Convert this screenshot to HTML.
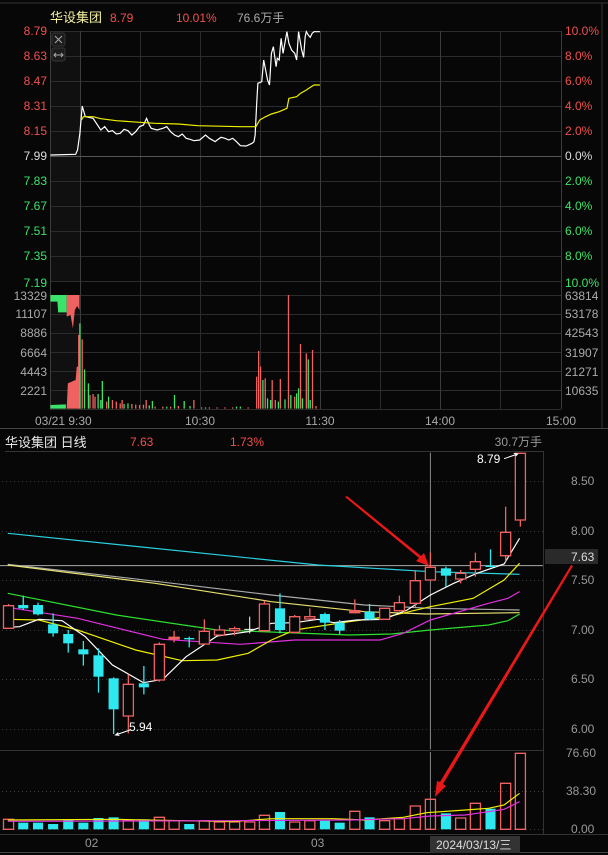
<!DOCTYPE html>
<html><head><meta charset="utf-8"><style>
html,body{margin:0;padding:0;background:#070707;}
svg{display:block;font-family:"Liberation Sans","Noto Sans CJK SC",sans-serif;}
.ns{vector-effect:non-scaling-stroke;}
</style></head><body>
<svg width="608" height="855" viewBox="0 0 608 855" xmlns="http://www.w3.org/2000/svg">
<rect width="608" height="855" fill="#070707"/>
<line x1="0" y1="3" x2="608" y2="3" stroke="#333" />
<line x1="602" y1="3" x2="602" y2="428" stroke="#333"/>
<line x1="0" y1="428.5" x2="608" y2="428.5" stroke="#444"/>
<line x1="0" y1="852.5" x2="608" y2="852.5" stroke="#444"/>
<rect x="50" y="31" width="30" height="251" fill="#101010"/>
<rect x="50" y="295" width="30" height="114" fill="#101010"/>
<g stroke="#2c2c2c" stroke-width="1">
<line x1="50" y1="31.5" x2="561" y2="31.5"/><line x1="50" y1="56.5" x2="561" y2="56.5"/><line x1="50" y1="81.5" x2="561" y2="81.5"/><line x1="50" y1="106.5" x2="561" y2="106.5"/><line x1="50" y1="131.5" x2="561" y2="131.5"/>
<line x1="50" y1="181.5" x2="561" y2="181.5"/><line x1="50" y1="206.5" x2="561" y2="206.5"/><line x1="50" y1="231.5" x2="561" y2="231.5"/><line x1="50" y1="256.5" x2="561" y2="256.5"/><line x1="50" y1="281.5" x2="561" y2="281.5"/>
<line x1="50" y1="295.5" x2="561" y2="295.5"/><line x1="50" y1="314.5" x2="561" y2="314.5"/><line x1="50" y1="333.5" x2="561" y2="333.5"/><line x1="50" y1="352.5" x2="561" y2="352.5"/><line x1="50" y1="371.5" x2="561" y2="371.5"/><line x1="50" y1="390.5" x2="561" y2="390.5"/><line x1="50" y1="409.5" x2="561" y2="409.5"/>
<line x1="140.5" y1="31" x2="140.5" y2="409"/><line x1="200.5" y1="31" x2="200.5" y2="409"/><line x1="260.5" y1="31" x2="260.5" y2="409"/><line x1="380.5" y1="31" x2="380.5" y2="409"/><line x1="500.5" y1="31" x2="500.5" y2="409"/>
</g>
<g stroke="#3c3c3c"><line x1="80.5" y1="31" x2="80.5" y2="409"/><line x1="320.5" y1="31" x2="320.5" y2="409"/><line x1="440.5" y1="31" x2="440.5" y2="409"/><line x1="50.5" y1="31" x2="50.5" y2="409"/><line x1="561.5" y1="31" x2="561.5" y2="409"/>
<line x1="50" y1="156.5" x2="561" y2="156.5" stroke="#555"/></g>
<rect x="52" y="33" width="13" height="13" fill="#1c1c1c" stroke="#333" rx="2"/>
<path d="M55 36 L62 43 M62 36 L55 43" stroke="#aaa"/>
<rect x="52" y="48" width="13" height="13" fill="#1c1c1c" stroke="#333" rx="2"/>
<path d="M54 55 H63 M56 53 L54 55 L56 57 M61 53 L63 55 L61 57" stroke="#aaa" fill="none"/>
<g transform="scale(0.38776,0.33333)" fill="none">
<path class="ns" stroke="#fff" stroke-width="1.2" d="M130 465 L195 463 L200 450 L206 400 L212 318 L220 350 L240 355 L260 390 L270 380 L280 395 L290 392 L300 402 L310 400 L320 388 L330 392 L340 405 L350 395 L360 380 L370 375 L378 355 L385 375 L390 385 L405 390 L420 385 L430 380 L440 395 L450 405 L460 410 L470 402 L480 415 L490 418 L500 422 L515 420 L520 415 L530 405 L540 415 L555 425 L560 420 L570 412 L580 415 L590 420 L600 415 L610 425 L620 437 L635 438 L650 430 L655 425 L658 405 L662 310 L665 250 L675 245 L680 180 L690 240 L695 255 L700 160 L705 140 L712 200 L715 175 L720 180 L723 140 L725 115 L730 160 L740 95 L745 130 L752 150 L760 160 L765 180 L770 95 L778 150 L783 172 L787 110 L790 95 L795 105 L800 112 L805 100 L810 95 L825 95"/>
<path class="ns" stroke="#f0f000" stroke-width="1.2" d="M210 360 L215 350 L240 350 L260 356 L300 362 L360 367 L400 370 L460 372 L510 377 L620 380 L660 380 L670 360 L685 350 L700 342 L720 335 L740 325 L745 295 L765 290 L775 280 L790 270 L800 262 L810 255 L825 255"/>
<polygon fill="#3be36a" points="130,885 172,885 172,937 150,937 148,905 130,905"/>
<polygon fill="#f06262" points="172,885 205,885 205,930 199,918 193,930 188,985 182,945 172,950"/>
<polygon fill="#3be36a" points="130,1226 130,1215 170,1213 170,1226"/>
<polygon fill="#f06262" points="172,1226 175,1150 185,1145 195,1140 198,1100 203,1100 205,1226"/>
<path class="ns" stroke="#f06262" stroke-width="1.3" d="M203 1226V1005 M212 1226V1018 M232 1226V1185 M240 1226V1182 M245 1226V1190 M275 1226V1205 M290 1226V1200 M300 1226V1205 M315 1226V1200 M340 1226V1212 M360 1226V1215 M377 1226V1200 M400 1226V1220 M440 1226V1220 M500 1226V1200 M520 1226V1222 M560 1226V1222 M600 1226V1222 M662 1226V1130 M667 1226V1053 M672 1226V1100 M684 1226V1135 M702 1226V1140 M710 1226V1200 M723 1226V1137 M744 1226V885 M760 1226V1190 M775 1226V1032 M790 1226V1060 M806 1226V1050 M815 1226V1218 M310 1226V1210 M350 1226V1214 M370 1226V1214 M420 1226V1220 M460 1226V1218 M540 1226V1222 M580 1226V1222 M640 1226V1222"/>
<path class="ns" stroke="#3be36a" stroke-width="1.3" d="M206 1226V970 M218 1226V1108 M228 1226V1150 M253 1226V1182 M264 1226V1143 M280 1226V1190 M330 1226V1210 M393 1226V1203 M450 1226V1185 M475 1226V1203 M610 1226V1220 M678 1226V1140 M690 1226V1195 M698 1226V1200 M718 1226V1205 M735 1226V1198 M750 1226V1185 M765 1226V1180 M770 1226V1165 M780 1226V1195 M795 1226V1078 M800 1226V1200 M260 1226V1200 M320 1226V1212 M385 1226V1216 M430 1226V1220 M490 1226V1218 M530 1226V1222 M620 1226V1220"/>
</g>
<g font-size="12">
<text x="50" y="22" fill="#f4f0a0" font-size="13">华设集团</text>
<text x="110" y="22" fill="#f05050">8.79</text>
<text x="176" y="22" fill="#f05050">10.01%</text>
<text x="237" y="22" fill="#aaa">76.6万手</text>
<g text-anchor="end">
<text x="47" y="35" fill="#f05050">8.79</text><text x="47" y="60" fill="#f05050">8.63</text><text x="47" y="85" fill="#f05050">8.47</text><text x="47" y="110" fill="#f05050">8.31</text><text x="47" y="135" fill="#f05050">8.15</text>
<text x="47" y="160" fill="#ddd">7.99</text>
<text x="47" y="185" fill="#3be36a">7.83</text><text x="47" y="210" fill="#3be36a">7.67</text><text x="47" y="235" fill="#3be36a">7.51</text><text x="47" y="260" fill="#3be36a">7.35</text><text x="47" y="287" fill="#3be36a">7.19</text>
<g fill="#aaa"><text x="47" y="300">13329</text><text x="47" y="318">11107</text><text x="47" y="337">8886</text><text x="47" y="357">6664</text><text x="47" y="376">4443</text><text x="47" y="395">2221</text></g>
</g>
<text x="565" y="35" fill="#f05050">10.0%</text><text x="565" y="60" fill="#f05050">8.0%</text><text x="565" y="85" fill="#f05050">6.0%</text><text x="565" y="110" fill="#f05050">4.0%</text><text x="565" y="135" fill="#f05050">2.0%</text>
<text x="565" y="160" fill="#ddd">0.0%</text>
<text x="565" y="185" fill="#3be36a">2.0%</text><text x="565" y="210" fill="#3be36a">4.0%</text><text x="565" y="235" fill="#3be36a">6.0%</text><text x="565" y="260" fill="#3be36a">8.0%</text><text x="565" y="287" fill="#3be36a">10.0%</text>
<g fill="#aaa"><text x="565" y="300">63814</text><text x="565" y="318">53178</text><text x="565" y="337">42543</text><text x="565" y="357">31907</text><text x="565" y="376">21271</text><text x="565" y="395">10635</text>
<text x="35" y="425">03/21 9:30</text><text x="200" y="425" text-anchor="middle">10:30</text><text x="320" y="425" text-anchor="middle">11:30</text><text x="440" y="425" text-anchor="middle">14:00</text><text x="561" y="425" text-anchor="middle">15:00</text></g>
</g>
<line x1="5" y1="451.5" x2="543" y2="451.5" stroke="#333"/>
<line x1="543.5" y1="451" x2="543.5" y2="834" stroke="#333"/>
<line x1="0" y1="750.5" x2="543" y2="750.5" stroke="#333"/>
<line x1="0" y1="834.5" x2="608" y2="834.5" stroke="#333"/>
<g stroke="#3a3a3a" stroke-dasharray="1,3">
<line x1="2" y1="481.5" x2="543" y2="481.5"/><line x1="2" y1="531.5" x2="543" y2="531.5"/><line x1="2" y1="580.5" x2="543" y2="580.5"/><line x1="2" y1="630.5" x2="543" y2="630.5"/><line x1="2" y1="679.5" x2="543" y2="679.5"/><line x1="2" y1="729.5" x2="543" y2="729.5"/><line x1="2" y1="791.5" x2="543" y2="791.5"/><line x1="2" y1="829.5" x2="543" y2="829.5"/>
</g>
<g transform="translate(0,430) scale(0.38776,0.33333)" fill="none">
<line class="ns" x1="0" y1="407" x2="1400" y2="407" stroke="#aaa"/>
<line class="ns" x1="1110" y1="68" x2="1110" y2="958" stroke="#888"/>
<line class="ns" x1="1110" y1="966" x2="1110" y2="1198" stroke="#888"/>
<g class="ns" stroke-width="1.2">
<path class="ns" stroke="#2ad0e0" d="M20 310 L820 405 L1110 425 L1340 433"/>
<path class="ns" stroke="#aaa" d="M20 403 L300 440 L700 495 L940 525 L1110 535 L1340 540"/>
<path class="ns" stroke="#e8e070" d="M20 405 L400 460 L700 515 L940 545 L1100 552 L1340 548"/>
<path class="ns" stroke="#2ee02e" d="M20 490 L300 555 L560 600 L900 615 L1010 612 L1110 600 L1260 585 L1310 572 L1340 552"/>
<path class="ns" stroke="#e030e0" d="M20 532 L200 565 L420 628 L620 643 L760 630 L980 630 L1040 610 L1110 570 L1260 520 L1310 505 L1340 485"/>
<path class="ns" stroke="#f0f000" d="M20 568 L100 570 L200 600 L350 660 L470 692 L560 690 L640 670 L700 630 L760 600 L900 575 L1000 560 L1110 530 L1220 505 L1300 450 L1340 400"/>
<path class="ns" stroke="#fff" d="M20 592 L50 590 L100 568 L160 572 L220 620 L290 705 L370 758 L420 748 L480 680 L560 618 L640 605 L700 580 L760 578 L820 568 L860 578 L920 570 L990 568 L1050 540 L1110 495 L1170 460 L1230 430 L1300 402 L1340 325"/>
</g>
<path class="ns" stroke="#f06262" stroke-width="1.3" d="M22 522V597 M331 733V910 M411 637V755 M449 603V637 M527 568V645 M566 586V618 M605 590V616 M682 512V605 M760 555V610 M799 535V570 M915 508V550 M992 535V570 M1030 497V545 M1071 420V532 M1110 367V452 M1188 420V460 M1226 368V440 M1304 230V395 M1342 68V290"/>
<path class="ns" stroke="#2ee8f0" stroke-width="1.3" d="M60 497V540 M98 518V556 M137 550V620 M176 600V668 M215 633V707 M254 655V788 M293 742V912 M371 708V793 M488 620V652 M722 490V610 M838 548V600 M876 570V612 M953 522V570 M1150 410V470 M1265 358V412"/>
<path class="ns" stroke="#fff" d="M644 560V610 M630 598H658"/>
<g fill="#070707" stroke="#f06262" stroke-width="1.3">
<rect class="ns" x="9" y="527" width="26" height="68"/><rect class="ns" x="318" y="763" width="26" height="95"/><rect class="ns" x="398" y="643" width="26" height="107"/><rect class="ns" x="436" y="622" width="26" height="5" fill="#f06262"/><rect class="ns" x="514" y="604" width="26" height="38"/><rect class="ns" x="553" y="600" width="26" height="15"/><rect class="ns" x="592" y="596" width="26" height="6"/><rect class="ns" x="669" y="522" width="26" height="80"/><rect class="ns" x="747" y="560" width="26" height="47"/><rect class="ns" x="786" y="560" width="26" height="7"/><rect class="ns" x="902" y="542" width="26" height="6" fill="#f06262"/><rect class="ns" x="979" y="535" width="26" height="33"/><rect class="ns" x="1017" y="518" width="26" height="24"/><rect class="ns" x="1058" y="452" width="26" height="68"/><rect class="ns" x="1097" y="412" width="26" height="38"/><rect class="ns" x="1175" y="430" width="26" height="17"/><rect class="ns" x="1213" y="395" width="26" height="23"/><rect class="ns" x="1291" y="307" width="26" height="70"/><rect class="ns" x="1329" y="70" width="26" height="200"/>
</g>
<g fill="#2ee8f0">
<rect x="47" y="525" width="26" height="10"/><rect x="85" y="525" width="26" height="28"/><rect x="124" y="583" width="26" height="27"/><rect x="163" y="612" width="26" height="28"/><rect x="202" y="658" width="26" height="15"/><rect x="241" y="676" width="26" height="64"/><rect x="280" y="745" width="26" height="93"/><rect x="358" y="760" width="26" height="12"/><rect x="475" y="624" width="26" height="4"/><rect x="709" y="535" width="26" height="65"/><rect x="825" y="552" width="26" height="26"/><rect x="863" y="578" width="26" height="24"/><rect x="940" y="545" width="26" height="23"/><rect x="1137" y="415" width="26" height="22"/><rect x="1252" y="407" width="26" height="4"/>
<rect x="47" y="1178" width="26" height="20"/><rect x="85" y="1178" width="26" height="20"/><rect x="124" y="1182" width="26" height="16"/><rect x="163" y="1170" width="26" height="28"/><rect x="202" y="1178" width="26" height="20"/><rect x="241" y="1164" width="26" height="34"/><rect x="280" y="1162" width="26" height="36"/><rect x="358" y="1168" width="26" height="30"/><rect x="475" y="1182" width="26" height="16"/><rect x="709" y="1146" width="26" height="52"/><rect x="825" y="1172" width="26" height="26"/><rect x="863" y="1178" width="26" height="20"/><rect x="940" y="1162" width="26" height="36"/><rect x="1137" y="1150" width="26" height="48"/><rect x="1252" y="1136" width="26" height="62"/>
</g>
<g fill="none" stroke="#f06262" stroke-width="1.3">
<rect class="ns" x="9" y="1168" width="26" height="30"/><rect class="ns" x="318" y="1172" width="26" height="26"/><rect class="ns" x="398" y="1162" width="26" height="36"/><rect class="ns" x="436" y="1172" width="26" height="26"/><rect class="ns" x="514" y="1172" width="26" height="26"/><rect class="ns" x="553" y="1176" width="26" height="22"/><rect class="ns" x="592" y="1176" width="26" height="22"/><rect class="ns" x="631" y="1176" width="26" height="22"/><rect class="ns" x="669" y="1156" width="26" height="42"/><rect class="ns" x="747" y="1176" width="26" height="22"/><rect class="ns" x="786" y="1172" width="26" height="26"/><rect class="ns" x="902" y="1144" width="26" height="54"/><rect class="ns" x="979" y="1172" width="26" height="26"/><rect class="ns" x="1017" y="1166" width="26" height="32"/><rect class="ns" x="1058" y="1128" width="26" height="70"/><rect class="ns" x="1097" y="1108" width="26" height="90"/><rect class="ns" x="1175" y="1164" width="26" height="34"/><rect class="ns" x="1213" y="1120" width="26" height="78"/><rect class="ns" x="1291" y="1060" width="26" height="138"/><rect class="ns" x="1329" y="970" width="26" height="228"/>
</g>
<path class="ns" stroke="#f0f000" stroke-width="1.2" d="M20 1170 L300 1168 L600 1175 L700 1166 L860 1166 L940 1170 L1040 1162 L1100 1148 L1200 1140 L1260 1135 L1300 1125 L1340 1090"/>
<path class="ns" stroke="#e030e0" stroke-width="1.2" d="M20 1174 L600 1172 L900 1170 L1040 1166 L1110 1158 L1200 1155 L1260 1145 L1300 1138 L1340 1115"/>
<path class="ns" stroke="#fff" d="M1300 86 L1335 72 M1325 70 L1335 72 L1330 78 M335 900 L298 915 M305 908 L298 915 L308 916"/>
</g>
<!-- arrows in original coords -->
<polygon fill="#e81818" points="345,497 347,496 421,556 424,553 429,566 416,561 419,558"/>
<polygon fill="#e81818" points="571,565 573,566 443,784 446,786 435,797 437,781 440,782"/>
<g font-size="12">
<text x="5" y="447" fill="#e8e8e8" font-size="13">华设集团 日线</text>
<text x="130" y="446" fill="#f05050">7.63</text>
<text x="230" y="446" fill="#f05050">1.73%</text>
<text x="542" y="446" fill="#999" text-anchor="end">30.7万手</text>
<text x="477" y="463" fill="#fff">8.79</text>
<text x="129" y="731" fill="#fff">5.94</text>
<g fill="#999"><text x="571" y="485">8.50</text><text x="571" y="535">8.00</text><text x="571" y="584">7.50</text><text x="571" y="634">7.00</text><text x="571" y="683">6.50</text><text x="571" y="733">6.00</text>
<text x="566" y="757">76.60</text><text x="566" y="795">38.30</text><text x="571" y="833">0.00</text>
<text x="85" y="847">02</text><text x="311" y="847">03</text></g>
<rect x="545" y="549" width="53" height="15" fill="#2a2a2a"/>
<text x="571" y="561" fill="#ddd">7.63</text>
<rect x="430" y="836" width="90" height="17" fill="#333" rx="1"/>
<text x="436" y="849" fill="#ddd">2024/03/13/三</text>
</g>
</svg>
</body></html>
